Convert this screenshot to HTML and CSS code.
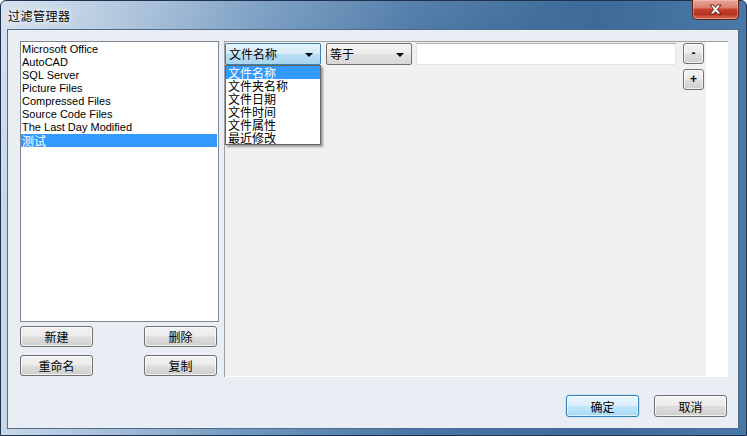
FILE: index.html
```html
<!DOCTYPE html>
<html>

<head>
    <meta charset="utf-8">
    <link rel="stylesheet" href="styles.css">
</head>

<body>

    <div class="window">
        <div class="titlebar">
            <span class="title">过滤管理器</span>
            <div class="close-btn">
                <svg width="13" height="11" viewBox="0 0 13 11">
                    <path d="M1 1 H4.5 L6.5 3.5 L8.5 1 H12 L8.3 5.5 L12 10 H8.5 L6.5 7.5 L4.5 10 H1 L4.7 5.5 Z"
                        fill="#fff" stroke="#5a1a10" stroke-width="0.9" stroke-linejoin="round" />
                </svg>
            </div>
        </div>

        <div class="client">
            <div class="main">
                <!-- 过滤器列表 -->
                <div class="left-col">
                    <ul class="listbox">
                        <li class="list-item">Microsoft Office</li>
                        <li class="list-item">AutoCAD</li>
                        <li class="list-item">SQL Server</li>
                        <li class="list-item">Picture Files</li>
                        <li class="list-item">Compressed Files</li>
                        <li class="list-item">Source Code Files</li>
                        <li class="list-item">The Last Day Modified</li>
                        <li class="list-item cjk selected">测试</li>
                    </ul>
                    <div class="btn-grid">
                        <button class="btn">新建</button>
                        <button class="btn">删除</button>
                        <button class="btn">重命名</button>
                        <button class="btn">复制</button>
                    </div>
                </div>

                <!-- 条件区域 -->
                <div class="rule-panel">
                    <div class="rule-area">
                        <div class="rule-row">
                            <div class="combo combo-open">
                                <span>文件名称</span>
                                <span class="arrow"></span>
                                <ul class="dropdown">
                                    <li class="drop-item selected">文件名称</li>
                                    <li class="drop-item">文件夹名称</li>
                                    <li class="drop-item">文件日期</li>
                                    <li class="drop-item">文件时间</li>
                                    <li class="drop-item">文件属性</li>
                                    <li class="drop-item">最近修改</li>
                                </ul>
                            </div>
                            <div class="combo combo-op">
                                <span>等于</span>
                                <span class="arrow"></span>
                            </div>
                            <div class="textbox"></div>
                            <div class="side-btns">
                                <button class="btn btn-small">-</button>
                                <button class="btn btn-small">+</button>
                            </div>
                        </div>
                    </div>
                </div>
            </div>

            <div class="footer">
                <button class="btn btn-default">确定</button>
                <button class="btn">取消</button>
            </div>
        </div>
    </div>

</body>

</html>
```

FILE: styles.css
```css
/* 窗口框架 */
body {
    margin: 0;
    font-family: "Noto Sans CJK SC", sans-serif;
    font-size: 12px;
}

.window {
    width: 745px;
    height: 434px;
    border: 1px solid #1d3250;
    border-radius: 6px 6px 0 0;
    background:
        linear-gradient(160deg, rgba(255, 255, 255, 0.25) 0%, rgba(255, 255, 255, 0) 30%),
        linear-gradient(to right, #c9d8e8 0%, #a8c0d9 14%, #6e95bd 34%, #4a77a5 55%, #3d6a98 80%, #4a79a8 100%);
    display: flex;
    flex-direction: column;
}

.titlebar {
    height: 28px;
    position: relative;
    display: flex;
    align-items: center;
}

.title {
    margin-left: 7px;
    margin-top: 1px;
    color: #000;
    letter-spacing: 0.5px;
    line-height: 14px;
    text-shadow: 0 0 6px #fff, 0 0 3px #fff;
}

.close-btn {
    position: absolute;
    top: -1px;
    right: 7px;
    width: 45px;
    height: 19px;
    border: 1px solid #5a2219;
    border-top: none;
    border-radius: 0 0 5px 5px;
    background: linear-gradient(to bottom, #e8a899 0%, #d9806d 40%, #c4422c 50%, #b7331f 75%, #d9745c 100%);
    box-shadow: inset 0 0 0 1px rgba(255, 200, 190, 0.45);
    display: flex;
    align-items: center;
    justify-content: center;
}

/* 客户区 */
.client {
    flex: 1;
    margin: 0 7px 6px 6px;
    border: 1px solid #4f6c8e;
    background: #e9eef5;
    display: flex;
    flex-direction: column;
}

.main {
    display: flex;
    align-items: flex-start;
    padding: 11px 0 0 12px;
}

.left-col {
    width: 199px;
    margin-right: 5px;
}

.listbox {
    list-style: none;
    margin: 0;
    padding: 1px 1px 0 0;
    height: 278px;
    border: 1px solid #828790;
    background: #fff;
}

.list-item {
    height: 13px;
    line-height: 13px;
    padding-left: 1px;
    font-family: "Liberation Sans", Arial, sans-serif;
    font-size: 11px;
    color: #000;
    white-space: nowrap;
}

.list-item.cjk {
    font-family: "Noto Sans CJK SC", sans-serif;
    font-size: 12px;
}

.list-item.selected {
    background: #3399ff;
    color: #fff;
}

.btn-grid {
    display: grid;
    grid-template-columns: 73px 73px;
    justify-content: space-between;
    row-gap: 8px;
    margin-top: 4px;
    padding-right: 2px;
}

/* 按钮 */
.btn {
    height: 21px;
    padding: 0;
    border: 1px solid #707070;
    border-radius: 3px;
    background: linear-gradient(to bottom, #f2f2f2 0%, #ebebeb 48%, #dddddd 52%, #cfcfcf 100%);
    box-shadow: inset 0 0 0 1px rgba(255, 255, 255, 0.7);
    font-family: "Noto Sans CJK SC", sans-serif;
    font-size: 12px;
    line-height: 17px;
    color: #000;
}

.btn-default {
    border-color: #3c7fb1;
    background: linear-gradient(to bottom, #eaf6fd 0%, #d9f0fc 48%, #bee6fd 52%, #a7d9f5 100%);
    box-shadow: inset 0 0 0 1px rgba(255, 255, 255, 0.6), 0 0 2px #8ccbee;
}

.btn-small {
    width: 21px;
    height: 21px;
    font-family: "Liberation Sans", Arial, sans-serif;
    font-weight: bold;
    font-size: 12px;
    line-height: 15px;
}

/* 右侧条件面板 */
.rule-panel {
    width: 503px;
    height: 335px;
    border-top: 1px solid #a0a0a0;
    border-left: 1px solid #a0a0a0;
    background: #fff;
}

.rule-area {
    width: 481px;
    height: 334px;
    background: #f0f0f0;
}

.rule-row {
    display: flex;
    align-items: flex-start;
    padding-top: 1px;
}

.combo {
    position: relative;
    height: 20px;
    border: 1px solid #707070;
    border-radius: 2px;
    background: linear-gradient(to bottom, #f4f4f4 0%, #ececec 48%, #e0e0e0 52%, #d8d8d8 100%);
    display: flex;
    align-items: center;
    justify-content: space-between;
    padding: 0 7px 0 3px;
    line-height: 14px;
}

.combo-open {
    width: 84px;
    margin-right: 5px;
    border-color: #3c7fb1;
    background: linear-gradient(to bottom, #e6f3fb 0%, #d4ebf8 48%, #b9def4 52%, #a9d5f0 100%);
}

.combo-op {
    width: 74px;
    margin-right: 4px;
}

.arrow {
    width: 0;
    height: 0;
    border-left: 4px solid transparent;
    border-right: 4px solid transparent;
    border-top: 4px solid #000;
    margin-top: 1px;
}

.dropdown {
    position: absolute;
    top: 21px;
    left: -1px;
    width: 94px;
    margin: 0;
    padding: 0;
    list-style: none;
    border: 1px solid #646464;
    background: #fff;
    box-shadow: 2px 2px 2px rgba(0, 0, 0, 0.35);
}

.drop-item {
    height: 13px;
    line-height: 13px;
    padding-left: 2px;
    color: #000;
    white-space: nowrap;
}

.drop-item.selected {
    background: #3399ff;
    color: #fff;
}

.textbox {
    width: 258px;
    height: 20px;
    margin-right: 7px;
    border: 1px solid #e2e3ea;
    border-top-color: #abadb3;
    background: #fff;
}

.side-btns {
    display: flex;
    flex-direction: column;
    gap: 5px;
}

/* 底部按钮 */
.footer {
    display: flex;
    justify-content: flex-end;
    gap: 15px;
    margin-top: 18px;
    padding-right: 11px;
}

.footer .btn {
    width: 73px;
    height: 22px;
}
```
